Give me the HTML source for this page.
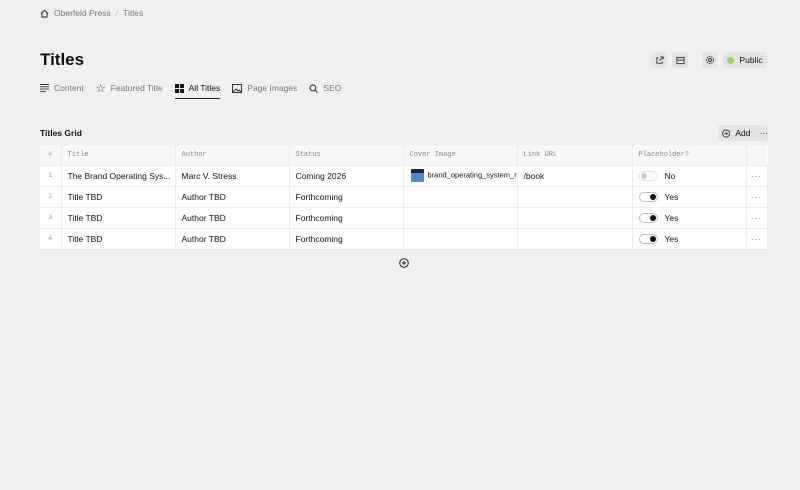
<!DOCTYPE html><html><head><style>
*{box-sizing:border-box;margin:0;padding:0}
body{width:800px;height:490px;background:#f0f0f0;font-family:"Liberation Sans",sans-serif;color:#111;position:relative;overflow:hidden}
.abs{position:absolute}
.bc{top:8px;left:40px;font-size:8.5px;color:#777;display:flex;align-items:center;gap:5px}
h1{position:absolute;top:50px;left:40px;font-size:17px;font-weight:bold}
.tabs{position:absolute;top:80px;left:40px;display:flex;font-size:8.5px;color:#777}
.tab{display:flex;align-items:center;gap:5px;margin-right:12px;height:16px;position:relative}
.tab.on{color:#111}
.tab.on:after{content:"";position:absolute;left:0;right:0;bottom:-3px;height:1.5px;background:#222}
.btn{position:absolute;background:#e4e4e4;border-radius:3px;height:16px;display:flex;align-items:center;justify-content:center;font-size:8.5px}
table{position:absolute;left:40px;top:145px;width:727px;border-collapse:collapse;background:#fff;font-size:8.5px;table-layout:fixed}
td,th{height:21px;border-right:1px solid #ececec;border-bottom:1px solid #ececec;padding:0 6px;text-align:left;white-space:nowrap;overflow:hidden}
th{font-family:"Liberation Mono",monospace;font-weight:normal;color:#888;font-size:7px;background:#f8f8f8;height:20px}
td.n,th.n{color:#999;font-size:6.5px;text-align:center;padding:0}
.tg{display:inline-block;width:19px;height:10px;border-radius:5px;border:1px solid #bbb;vertical-align:-2px;margin-right:7px;position:relative;background:#fff}
.tg i{position:absolute;top:1px;width:6px;height:6px;border-radius:50%}
.dots{color:#666;text-align:center;padding:0;letter-spacing:1px}
</style></head><body>
<div class="abs bc"><svg width="9" height="9" viewBox="0 0 10 10"><path d="M1 5 5 1.5 9 5M2.2 4v5h5.6V4" fill="none" stroke="#333" stroke-width="1.2"/></svg><span>Oberfeld Press</span><span style="color:#bbb">/</span><span>Titles</span></div>
<h1>Titles</h1>
<div class="btn" style="left:651px;top:52px;width:16px"><svg width="9" height="9" viewBox="0 0 10 10" fill="none" stroke="#333"><path d="M4 2H2v6h6V6M5 5l4-4M6 1h3v3"/></svg></div>
<div class="btn" style="left:672px;top:52px;width:16px"><svg width="9" height="9" viewBox="0 0 10 10" fill="none" stroke="#333"><rect x="1" y="1.5" width="8" height="7"/><path d="M1 4.5h8"/></svg></div>
<div class="btn" style="left:702px;top:52px;width:16px"><svg width="10" height="10" viewBox="0 0 10 10" fill="none" stroke="#333"><circle cx="5" cy="5" r="1.5"/><circle cx="5" cy="5" r="3.5" stroke-dasharray="1.5 1"/></svg></div>
<div class="btn" style="left:723px;top:52px;width:44px;gap:5px"><span style="width:7px;height:7px;border-radius:50%;background:#9bd45a"></span>Public</div>
<div class="tabs">
<div class="tab"><svg width="9" height="8" viewBox="0 0 9 8" stroke="#333" stroke-width=".9"><path d="M0 .5h9M0 2.8h9M0 5.1h9M0 7.4h6"/></svg>Content</div>
<div class="tab"><span style="color:#333;font-size:11px">☆</span>Featured Title</div>
<div class="tab on"><svg width="9" height="9" viewBox="0 0 9 9" fill="#111"><rect width="4" height="4"/><rect x="5" width="4" height="4"/><rect y="5" width="4" height="4"/><rect x="5" y="5" width="4" height="4"/></svg>All Titles</div>
<div class="tab"><svg width="10" height="9" viewBox="0 0 10 9" fill="none" stroke="#333"><rect x=".5" y=".5" width="9" height="8"/><path d="M1 8l3-3 2 2 1-1 2 2"/></svg>Page Images</div>
<div class="tab"><svg width="9" height="9" viewBox="0 0 10 10" fill="none" stroke="#333" stroke-width="1.2"><circle cx="4.3" cy="4.3" r="3.3"/><path d="M6.8 6.8 9.5 9.5"/></svg>SEO</div>
</div>
<div class="abs" style="top:128px;left:40px;font-size:8.5px;font-weight:bold">Titles Grid</div>
<div class="btn" style="left:718px;top:125px;width:50px;gap:5px;justify-content:flex-start;padding-left:4px"><svg width="9" height="9" viewBox="0 0 10 10" fill="none" stroke="#222"><circle cx="5" cy="5" r="4.3"/><path d="M5 3v4M3 5h4"/></svg>Add<span style="margin-left:4px">···</span></div>
<table>
<colgroup><col style="width:21px"><col style="width:114px"><col style="width:114px"><col style="width:114px"><col style="width:114px"><col style="width:115px"><col style="width:114px"><col style="width:21px"></colgroup>
<tr><th class="n">#</th><th>Title</th><th>Author</th><th>Status</th><th>Cover Image</th><th>Link URL</th><th>Placeholder?</th><th style="border-right:none"></th></tr>
<tr><td class="n">1</td><td>The Brand Operating Sys...</td><td>Marc V. Stress</td><td>Coming 2026</td><td style="padding-left:7px;font-size:7.5px"><span style="display:inline-block;width:13px;height:13px;background:linear-gradient(#223 30%,#58c 30%);vertical-align:middle;margin-right:4px;border-radius:1px"></span>brand_operating_system_m</td><td>/book</td><td><span class="tg" style="border-color:#ddd"><i style="left:1px;background:#ccc"></i></span>No</td><td class="dots">···</td></tr>
<tr><td class="n">2</td><td>Title TBD</td><td>Author TBD</td><td>Forthcoming</td><td></td><td></td><td><span class="tg"><i style="right:1px;background:#111"></i></span>Yes</td><td class="dots">···</td></tr>
<tr><td class="n">3</td><td>Title TBD</td><td>Author TBD</td><td>Forthcoming</td><td></td><td></td><td><span class="tg"><i style="right:1px;background:#111"></i></span>Yes</td><td class="dots">···</td></tr>
<tr><td class="n">4</td><td>Title TBD</td><td>Author TBD</td><td>Forthcoming</td><td></td><td></td><td><span class="tg"><i style="right:1px;background:#111"></i></span>Yes</td><td class="dots">···</td></tr>
</table>
<svg class="abs" style="left:399px;top:258px" width="10" height="10" viewBox="0 0 10 10" fill="none" stroke="#222"><circle cx="5" cy="5" r="4.3"/><path d="M5 3v4M3 5h4"/></svg>
</body></html>
